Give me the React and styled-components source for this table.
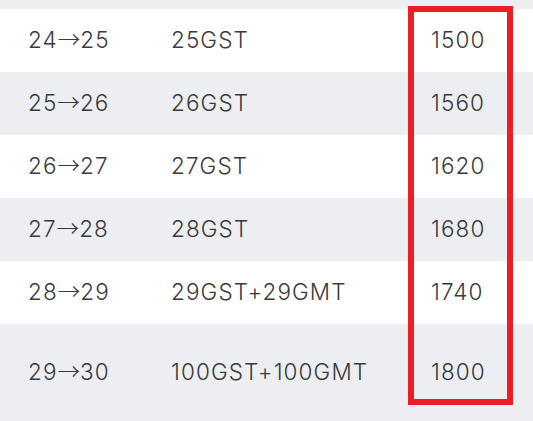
import React from 'react';
import styled, { createGlobalStyle } from 'styled-components';

const GlobalStyle = createGlobalStyle`
    html, body {
        margin: 0;
        padding: 0;
        background: #ffffff;
    }
    body {
        font-family: Inter, "Noto Sans", "Liberation Sans", sans-serif;
        -webkit-font-smoothing: antialiased;
    }
`;

const TableWrap = styled.div`
    position: relative;
    width: 533px;
    height: 421px;
    overflow: hidden;
`;

const Row = styled.div`
    display: grid;
    grid-template-columns: 143px 260px 1fr;
    align-items: center;
    box-sizing: border-box;
    padding: 0 0 2px 28px;
    height: ${(p) => p.$height}px;
    background: ${(p) => (p.$shaded ? '#edeef2' : '#ffffff')};
`;

const Cell = styled.div`
    font-size: 22.5px;
    font-weight: 300;
    line-height: 28px;
    color: #3a3a3c;
    white-space: nowrap;
    letter-spacing: 1.1px;
`;

const Arrow = styled.span`
    font-family: "Noto Sans CJK SC", sans-serif;
    font-weight: 300;
    line-height: 0;
    letter-spacing: 0;
`;

const Highlight = styled.div`
    position: absolute;
    left: 408px;
    top: 6px;
    width: 105px;
    height: 399px;
    box-sizing: border-box;
    border: 6px solid #ee1c25;
    pointer-events: none;
`;

const rows = [
    { from: 24, to: 25, reward: '25GST', price: 1500 },
    { from: 25, to: 26, reward: '26GST', price: 1560 },
    { from: 26, to: 27, reward: '27GST', price: 1620 },
    { from: 27, to: 28, reward: '28GST', price: 1680 },
    { from: 28, to: 29, reward: '29GST+29GMT', price: 1740 },
    { from: 29, to: 30, reward: '100GST+100GMT', price: 1800, tall: true },
];

const App = () => {
    return (
        <TableWrap>
            <GlobalStyle />
            <Row $height={9} $shaded />
            {rows.map((r, i) => (
                <Row key={r.from} $height={r.tall ? 98 : 63} $shaded={i % 2 === 1}>
                    <Cell>{r.from}<Arrow>→</Arrow>{r.to}</Cell>
                    <Cell>{r.reward}</Cell>
                    <Cell>{r.price}</Cell>
                </Row>
            ))}
            <Highlight />
        </TableWrap>
    );
};

export default App;
